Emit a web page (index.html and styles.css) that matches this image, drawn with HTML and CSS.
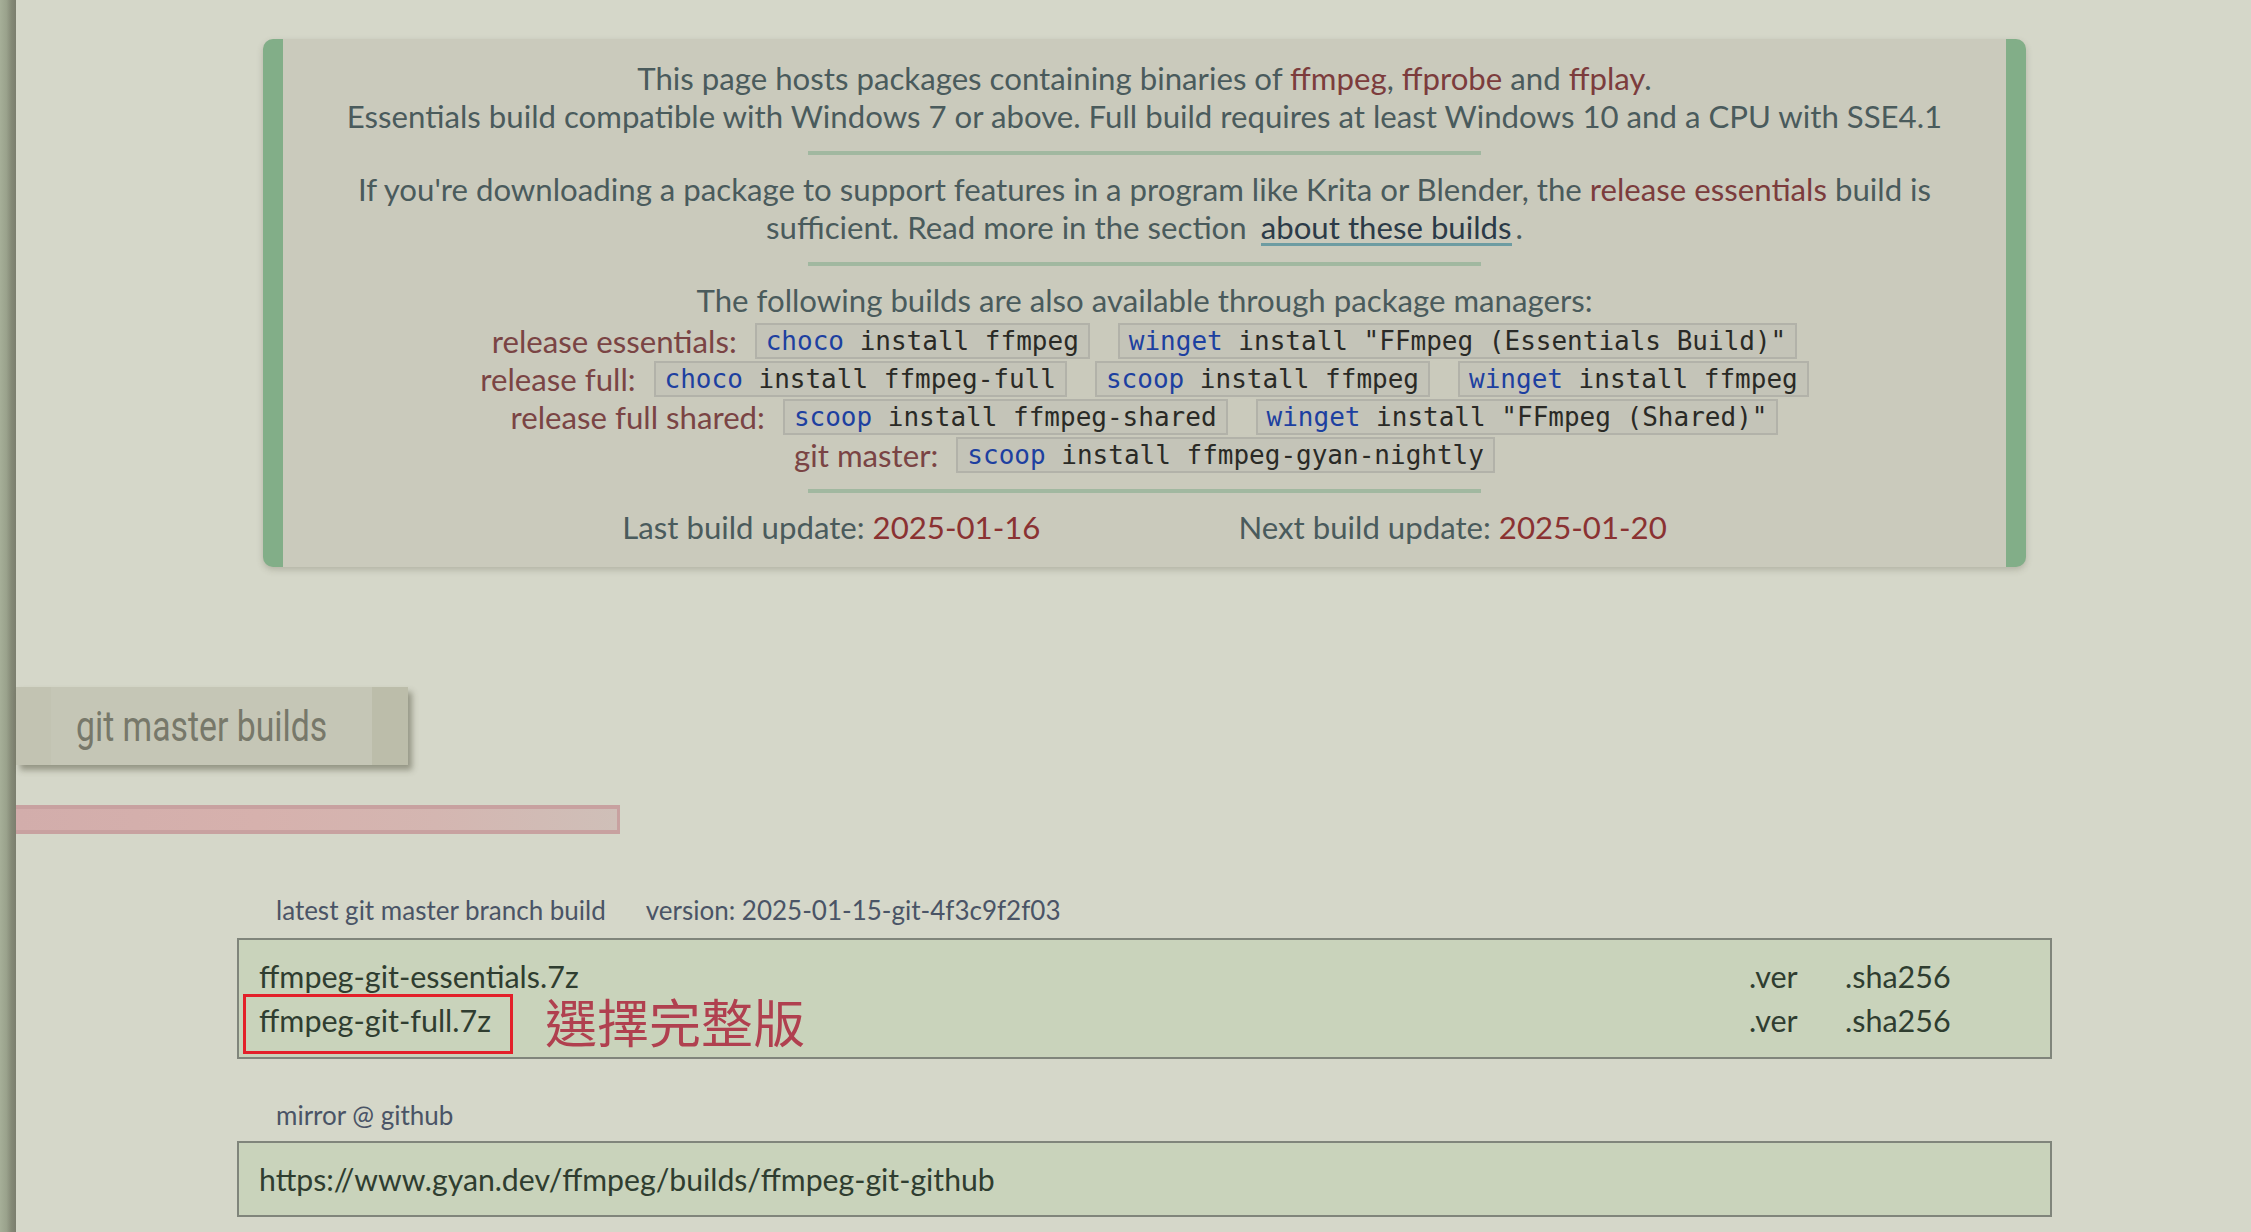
FILE: index.html
```html
<!DOCTYPE html>
<html lang="en">
<head>
<meta charset="utf-8">
<title>gyan.dev ffmpeg builds</title>
<link rel="stylesheet" href="styles.css">
</head>
<body>
<div class="sidebar"></div>
<main class="main">
  <section class="info">
    <p class="para">This page hosts packages containing binaries of <span class="hl">ffmpeg</span>, <span class="hl">ffprobe</span> and <span class="hl">ffplay</span>.<br>Essentials build compatible with Windows 7 or above. Full build requires at least Windows 10 and a CPU with SSE4.1</p>
    <hr class="sep">
    <p class="para">If you're downloading a package to support features in a program like Krita or Blender, the <span class="hl">release essentials</span> build is<br>sufficient. Read more in the section <a class="more" href="#about">about these builds</a>.</p>
    <hr class="sep">
    <p class="para">The following builds are also available through package managers:</p>
    <div class="pm-rows">
      <div class="pm-row"><span class="pm-label">release essentials:</span><code class="cmd"><span class="mgr">choco</span> install ffmpeg</code><code class="cmd"><span class="mgr">winget</span> install "FFmpeg (Essentials Build)"</code></div>
      <div class="pm-row"><span class="pm-label">release full:</span><code class="cmd"><span class="mgr">choco</span> install ffmpeg-full</code><code class="cmd"><span class="mgr">scoop</span> install ffmpeg</code><code class="cmd"><span class="mgr">winget</span> install ffmpeg</code></div>
      <div class="pm-row"><span class="pm-label">release full shared:</span><code class="cmd"><span class="mgr">scoop</span> install ffmpeg-shared</code><code class="cmd"><span class="mgr">winget</span> install "FFmpeg (Shared)"</code></div>
      <div class="pm-row"><span class="pm-label">git master:</span><code class="cmd"><span class="mgr">scoop</span> install ffmpeg-gyan-nightly</code></div>
    </div>
    <hr class="sep sep-last">
    <div class="updates">
      <span>Last build update: <span class="date">2025-01-16</span></span>
      <span>Next build update: <span class="date">2025-01-20</span></span>
    </div>
  </section>

  <h2 class="section-title"><span class="title-text">git master builds</span></h2>
  <div class="pink-bar"></div>

  <section class="build">
    <div class="build-label"><span>latest git master branch build</span><span>version: 2025-01-15-git-4f3c9f2f03</span></div>
    <div class="filebox">
      <div class="file-row"><span class="file-name"><a class="flink" href="#e">ffmpeg-git-essentials.7z</a></span><a class="fver" href="#v1">.ver</a><a class="fsha" href="#s1">.sha256</a></div>
      <div class="file-row"><span class="file-name"><a class="flink mark" href="#f">ffmpeg-git-full.7z<span class="note">選擇完整版</span></a></span><a class="fver" href="#v2">.ver</a><a class="fsha" href="#s2">.sha256</a></div>
    </div>
  </section>

  <section class="build mirror">
    <div class="build-label"><span>mirror @ github</span></div>
    <div class="filebox filebox-single">
      <div class="file-row"><a class="flink" href="#g">https://www.gyan.dev/ffmpeg/builds/ffmpeg-git-github</a></div>
    </div>
  </section>
</main>
</body>
</html>
```

FILE: styles.css
```css
html, body {
  margin: 0;
  padding: 0;
}
body {
  background: #d5d7c9;
  display: flex;
  min-height: 100vh;
  font-family: Lato, "Open Sans", sans-serif;
  overflow: hidden;
}
.sidebar {
  flex: none;
  width: 16px;
  background: linear-gradient(to right, #a6af98 0%, #9aa28c 40%, #858a77 70%, #7b7e6e 100%);
}
.main {
  flex: 1;
  padding-top: 39px;
}

/* info box */
.info {
  margin-left: 247px;
  width: 1763px;
  box-sizing: border-box;
  background: #cacabc;
  border-left: 20px solid #82ae88;
  border-right: 20px solid #82ae88;
  border-radius: 10px;
  padding: 20px 0 21px;
  text-align: center;
  color: #4a5b5c;
  font-size: 31.2px;
  line-height: 38px;
  box-shadow: 0 3px 6px rgba(80, 80, 60, 0.25);
}
.para {
  margin: 0;
}
.hl {
  color: #7c3c3c;
}
.more {
  color: #2c3b48;
  text-decoration: none;
  border-bottom: 3px solid #6d9ca2;
  margin: 0 4px 0 6px;
  line-height: 31px;
  display: inline-block;
}
.sep {
  width: 673px;
  height: 4px;
  border: 0;
  background: #a1b8a0;
  margin: 16px auto 15px;
}
.sep-last {
  margin-top: 15px;
  margin-bottom: 15px;
}
.pm-rows {
  margin-top: 3px;
}
.pm-row {
  display: flex;
  justify-content: center;
  align-items: center;
  height: 38px;
}
.pm-label {
  color: #7a4444;
  margin-right: 18px;
}
.cmd {
  font-family: "DejaVu Sans Mono", "Liberation Mono", monospace;
  font-size: 26px;
  line-height: 32px;
  height: 36px;
  box-sizing: border-box;
  padding: 0 9px;
  background: #c4c4b8;
  border: 2px solid #b2b2a9;
  color: #2a2a26;
  white-space: pre;
}
.cmd + .cmd {
  margin-left: 28px;
}
.mgr {
  color: #1d40a0;
}
.updates {
  display: flex;
  justify-content: center;
  gap: 198px;
}
.date {
  color: #8a3232;
}

/* section title */
.section-title {
  margin: 120px 0 0;
  width: 392px;
  height: 78px;
  box-sizing: border-box;
  padding: 2px 0 0 60px;
  background: linear-gradient(to right, #c2c3b2 0, #c2c3b2 35px, #c5c6b6 35px, #c5c6b6 356px, #bcbdaa 356px);
  box-shadow: 4px 5px 6px rgba(70, 70, 50, 0.45);
  font-family: Roboto, "DejaVu Sans", sans-serif;
  font-weight: normal;
  font-size: 43px;
  line-height: 74px;
  color: #77786a;
  white-space: nowrap;
}
.title-text {
  display: inline-block;
  transform: scaleX(0.785);
  transform-origin: left center;
}
.pink-bar {
  margin-top: 40px;
  width: 604px;
  height: 29px;
  box-sizing: border-box;
  border: 4px solid #c8a1a0;
  border-left: 0;
  border-right-width: 3px;
  background: linear-gradient(to right, #d2adab 0%, #d6b1ad 40%, #d4b6b1 70%, #cfbfb8 100%);
}

/* builds */
.build {
  margin-left: 221px;
  width: 1815px;
  margin-top: 61px;
}
.mirror {
  margin-top: 41px;
}
.build-label {
  display: flex;
  gap: 40px;
  padding-left: 39px;
  font-size: 26px;
  line-height: 31px;
  color: #4a5466;
  margin-bottom: 12px;
}
.mirror .build-label {
  margin-bottom: 10px;
}
.filebox {
  border: 2px solid #80857b;
  background: #c9d3bb;
  padding: 14px 20px 15px;
}
.filebox-single {
  padding: 14px 20px;
}
.file-row {
  display: flex;
  font-size: 30.5px;
  line-height: 44px;
  color: #2f3d30;
}
.filebox-single .file-row {
  font-size: 30.2px;
}
.file-row a {
  color: #2f3d30;
  text-decoration: none;
}
.file-name {
  flex: 1;
}
.fver {
  width: 96px;
}
.fsha {
  width: 185px;
}
.mark {
  position: relative;
}
.mark::after {
  content: "";
  position: absolute;
  left: -16px;
  right: -22px;
  top: -8px;
  bottom: -16px;
  border: 3px solid #e3202a;
}
.note {
  position: absolute;
  left: 286px;
  top: -7px;
  font-family: "Noto Sans CJK TC", "Noto Sans CJK SC", sans-serif;
  font-size: 52px;
  line-height: 52px;
  color: #b0404f;
  white-space: nowrap;
}
```
